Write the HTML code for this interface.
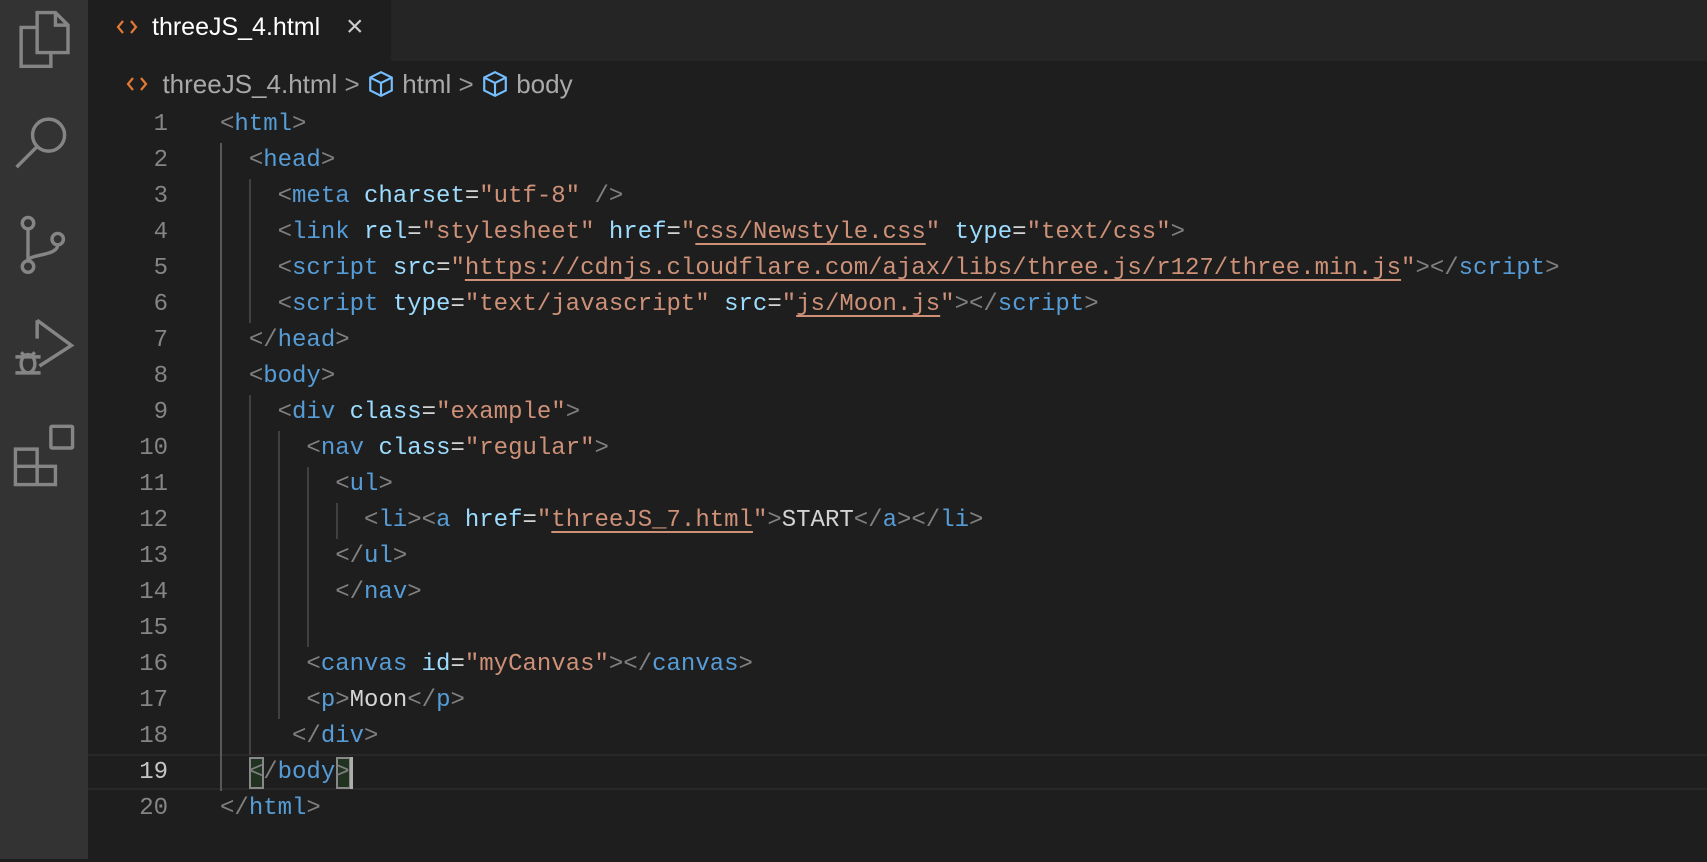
<!DOCTYPE html>
<html><head><meta charset="utf-8"><style>
*{margin:0;padding:0;box-sizing:border-box}
body{width:1707px;height:859px;background:#1e1e1e;overflow:hidden;position:relative;font-family:"Liberation Sans",sans-serif}
#act{position:absolute;left:0;top:0;width:88px;height:859px;background:#333}
#act svg{position:absolute;left:12px;width:64px;height:64px;fill:none;stroke:#858585;stroke-width:3}
#tabs{position:absolute;left:88px;top:0;right:0;height:61px;background:#252526}
#tab{position:absolute;left:88px;top:0;width:303px;height:61px;background:#1e1e1e;color:#fff;font-size:25px;line-height:54px}
.ic{position:absolute}
#bc{position:absolute;left:126px;top:66px;height:36px;line-height:36px;font-size:26px;color:#a9a9a9;white-space:pre}
.ln{position:absolute;left:100px;width:68px;text-align:right;font-family:"Liberation Mono",monospace;font-size:24px;line-height:36px;color:#858585}
.cl{position:absolute;left:220px;font-family:"Liberation Mono",monospace;font-size:24px;line-height:36px;color:#d4d4d4;white-space:pre}
.p{color:#808080}.t{color:#569cd6}.a{color:#9cdcfe}.s{color:#ce9178}.u{text-decoration:underline;text-underline-offset:5px}
.g{position:absolute;width:2px;background:#404040}
#code{position:absolute;left:0;top:3px;width:1707px;height:859px}
</style></head><body>
<div id="act">
<svg style="top:8px" viewBox="0 0 56 56"><path d="M22 4h16l11 11v24H22z M38 4v11h11 M22 17H8v34h26v-12"/></svg>
<svg style="top:110px" viewBox="0 0 56 56"><circle cx="32" cy="22" r="14"/><path d="M22 32L4 50"/></svg>
<svg style="top:214px" viewBox="0 0 56 56"><circle cx="14" cy="8" r="5"/><circle cx="14" cy="46" r="5"/><circle cx="40" cy="22" r="5"/><path d="M14 13v28 M40 27c0 10-26 8-26 14"/></svg>
<svg style="top:318px" viewBox="0 0 56 56"><path d="M22 2l30 22-28 18 M22 2v16"/><ellipse cx="14" cy="40" rx="6" ry="8"/><path d="M3 34h22 M3 48h22 M8 30l3 3 M20 30l-3 3"/></svg>
<svg style="top:424px" viewBox="0 0 56 56"><rect x="34" y="2" width="19" height="19" rx="1"/><path d="M3 22h19v31H3z M3 37h35v16H22 M22 22v31"/></svg>
</div>
<div id="tabs"></div>
<div id="tab"><svg class="ic" style="left:28px;top:18px" width="22" height="18" viewBox="0 0 22 18" fill="none" stroke="#e37933" stroke-width="2.2"><path d="M7 3L2 9l5 6 M15 3l5 6-5 6"/></svg><span style="position:absolute;left:64px">threeJS_4.html</span><span style="position:absolute;left:258px;font-size:30px;color:#ccc">×</span></div>
<div id="bc"><svg width="22" height="18" viewBox="0 0 22 18" fill="none" stroke="#e37933" stroke-width="2.2"><path d="M7 3L2 9l5 6 M15 3l5 6-5 6"/></svg>  threeJS_4.html <span style="color:#999">&gt;</span> <svg width="28" height="28" viewBox="0 0 26 26" style="vertical-align:-5px" fill="none" stroke="#75beff" stroke-width="2"><path d="M13 2l10 5v12l-10 5-10-5V7z M3 7l10 5 10-5 M13 12v12"/></svg> html <span style="color:#999">&gt;</span> <svg width="28" height="28" viewBox="0 0 26 26" style="vertical-align:-5px" fill="none" stroke="#75beff" stroke-width="2"><path d="M13 2l10 5v12l-10 5-10-5V7z M3 7l10 5 10-5 M13 12v12"/></svg> body</div>

<div id="code">
<div style="position:absolute;left:88px;right:0;top:751px;height:36px;border-top:2px solid #282828;border-bottom:2px solid #282828"></div>

<div class="g" style="left:220px;top:140px;height:648px;background:#585858"></div>
<div class="g" style="left:249px;top:176px;height:144px"></div>
<div class="g" style="left:249px;top:392px;height:360px"></div>
<div class="g" style="left:278px;top:428px;height:288px"></div>
<div class="g" style="left:307px;top:464px;height:180px"></div>
<div class="g" style="left:336px;top:500px;height:36px"></div>

<div class="ln" style="top:104px">1</div><div class="ln" style="top:140px">2</div><div class="ln" style="top:176px">3</div><div class="ln" style="top:212px">4</div><div class="ln" style="top:248px">5</div><div class="ln" style="top:284px">6</div><div class="ln" style="top:320px">7</div><div class="ln" style="top:356px">8</div><div class="ln" style="top:392px">9</div><div class="ln" style="top:428px">10</div><div class="ln" style="top:464px">11</div><div class="ln" style="top:500px">12</div><div class="ln" style="top:536px">13</div><div class="ln" style="top:572px">14</div><div class="ln" style="top:608px">15</div><div class="ln" style="top:644px">16</div><div class="ln" style="top:680px">17</div><div class="ln" style="top:716px">18</div><div class="ln" style="top:752px;color:#c6c6c6">19</div><div class="ln" style="top:788px">20</div>

<div class="cl" style="top:104px"><span class="p">&lt;</span><span class="t">html</span><span class="p">&gt;</span></div>
<div class="cl" style="top:140px">  <span class="p">&lt;</span><span class="t">head</span><span class="p">&gt;</span></div>
<div class="cl" style="top:176px">    <span class="p">&lt;</span><span class="t">meta</span> <span class="a">charset</span>=<span class="s">"utf-8"</span> <span class="p">/&gt;</span></div>
<div class="cl" style="top:212px">    <span class="p">&lt;</span><span class="t">link</span> <span class="a">rel</span>=<span class="s">"stylesheet"</span> <span class="a">href</span>=<span class="s">"<span class="u">css/Newstyle.css</span>"</span> <span class="a">type</span>=<span class="s">"text/css"</span><span class="p">&gt;</span></div>
<div class="cl" style="top:248px">    <span class="p">&lt;</span><span class="t">script</span> <span class="a">src</span>=<span class="s">"<span class="u">https://cdnjs.cloudflare.com/ajax/libs/three.js/r127/three.min.js</span>"</span><span class="p">&gt;&lt;/</span><span class="t">script</span><span class="p">&gt;</span></div>
<div class="cl" style="top:284px">    <span class="p">&lt;</span><span class="t">script</span> <span class="a">type</span>=<span class="s">"text/javascript"</span> <span class="a">src</span>=<span class="s">"<span class="u">js/Moon.js</span>"</span><span class="p">&gt;&lt;/</span><span class="t">script</span><span class="p">&gt;</span></div>
<div class="cl" style="top:320px">  <span class="p">&lt;/</span><span class="t">head</span><span class="p">&gt;</span></div>
<div class="cl" style="top:356px">  <span class="p">&lt;</span><span class="t">body</span><span class="p">&gt;</span></div>
<div class="cl" style="top:392px">    <span class="p">&lt;</span><span class="t">div</span> <span class="a">class</span>=<span class="s">"example"</span><span class="p">&gt;</span></div>
<div class="cl" style="top:428px">      <span class="p">&lt;</span><span class="t">nav</span> <span class="a">class</span>=<span class="s">"regular"</span><span class="p">&gt;</span></div>
<div class="cl" style="top:464px">        <span class="p">&lt;</span><span class="t">ul</span><span class="p">&gt;</span></div>
<div class="cl" style="top:500px">          <span class="p">&lt;</span><span class="t">li</span><span class="p">&gt;&lt;</span><span class="t">a</span> <span class="a">href</span>=<span class="s">"<span class="u">threeJS_7.html</span>"</span><span class="p">&gt;</span>START<span class="p">&lt;/</span><span class="t">a</span><span class="p">&gt;&lt;/</span><span class="t">li</span><span class="p">&gt;</span></div>
<div class="cl" style="top:536px">        <span class="p">&lt;/</span><span class="t">ul</span><span class="p">&gt;</span></div>
<div class="cl" style="top:572px">        <span class="p">&lt;/</span><span class="t">nav</span><span class="p">&gt;</span></div>
<div class="cl" style="top:644px">      <span class="p">&lt;</span><span class="t">canvas</span> <span class="a">id</span>=<span class="s">"myCanvas"</span><span class="p">&gt;&lt;/</span><span class="t">canvas</span><span class="p">&gt;</span></div>
<div class="cl" style="top:680px">      <span class="p">&lt;</span><span class="t">p</span><span class="p">&gt;</span>Moon<span class="p">&lt;/</span><span class="t">p</span><span class="p">&gt;</span></div>
<div class="cl" style="top:716px">     <span class="p">&lt;/</span><span class="t">div</span><span class="p">&gt;</span></div>
<div style="position:absolute;left:249px;top:754px;width:15px;height:32px;background:#1f3320;border:2px solid #888"></div>
<div style="position:absolute;left:336px;top:754px;width:15px;height:32px;background:#1f3320;border:2px solid #888"></div>
<div style="position:absolute;left:350px;top:754px;width:3px;height:32px;background:#aeafad"></div>
<div class="cl" style="top:752px">  <span class="p">&lt;/</span><span class="t">body</span><span class="p">&gt;</span></div>
<div class="cl" style="top:788px"><span class="p">&lt;/</span><span class="t">html</span><span class="p">&gt;</span></div>
</div>
</body></html>
